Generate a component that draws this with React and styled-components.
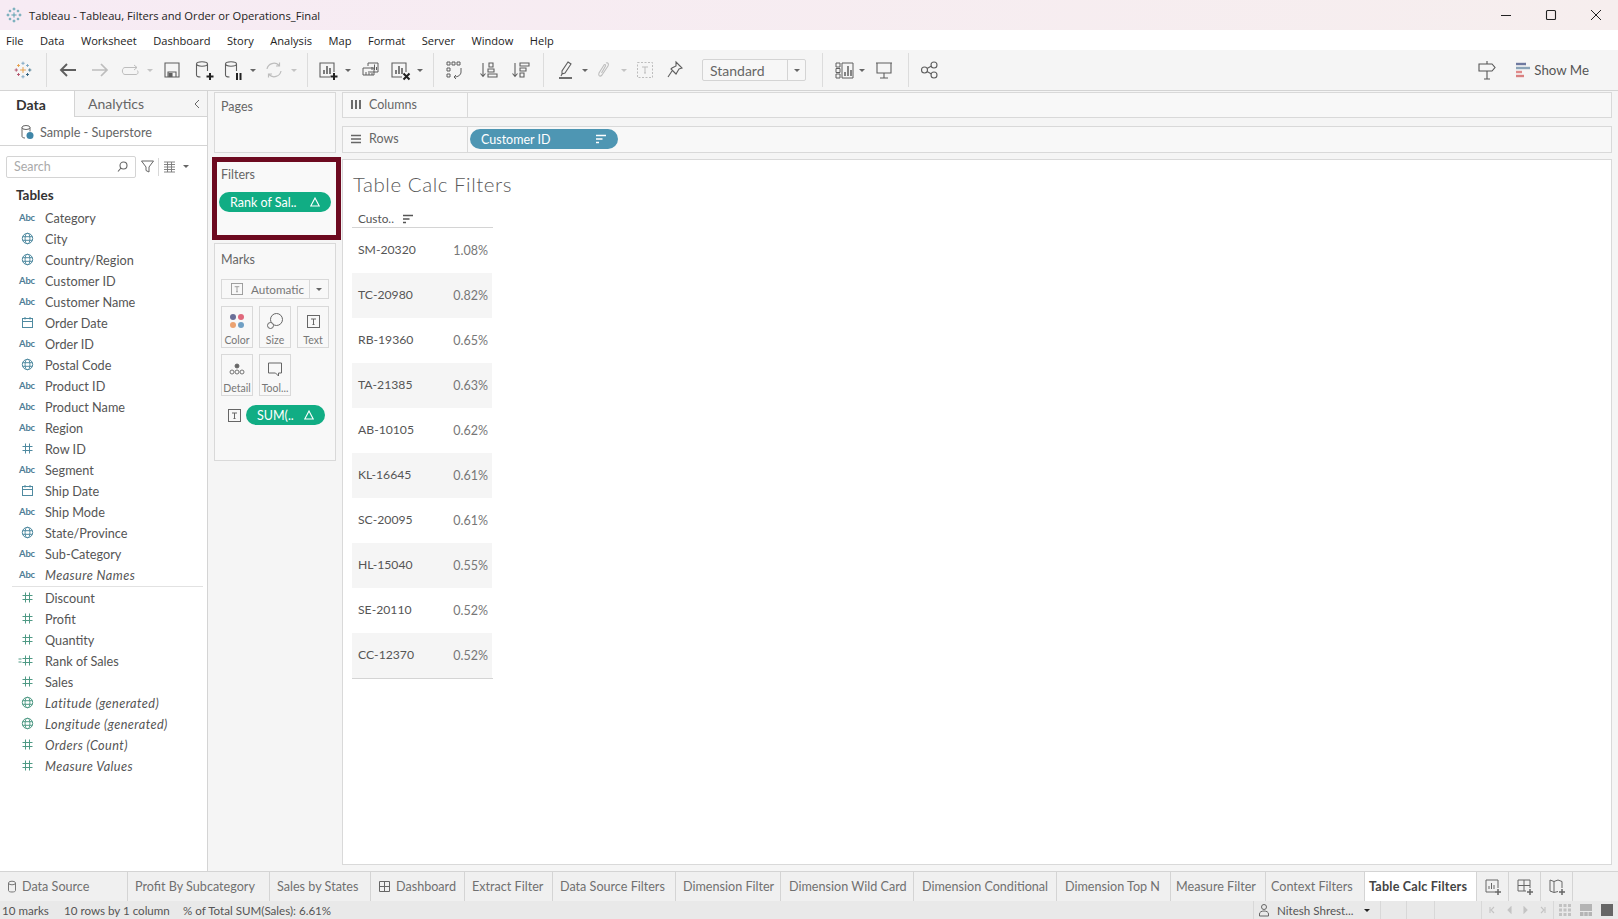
import React from "react";
import styled, { createGlobalStyle } from "styled-components";

const Global = createGlobalStyle`
  html, body { margin: 0; padding: 0; background: #fff; }
  * { box-sizing: border-box; }
`;
const UI = `"Open Sans", "Noto Sans", sans-serif`;
const TB = `Lato, "Open Sans", sans-serif`;

const Page = styled.div`
  width: 1618px; height: 919px; overflow: hidden; display: flex; flex-direction: column;
  font-family: ${TB}; color: #555; background: #f5f5f5;
`;
const TitleBar = styled.div`
  height: 30px; flex: none; display: flex; align-items: center; padding-left: 6px;
  background: linear-gradient(90deg, #f7ebf4, #f6eeee);
`;
const TitleText = styled.span`
  font: 11.2px ${UI}; color: #222; margin-left: 7px;
`;
const WinButtons = styled.div`
  margin-left: auto; display: flex; align-items: center; color: #222;
`;
const WinBtn = styled.div`
  width: 45px; height: 30px; display: flex; align-items: center; justify-content: center;
`;
const MenuBar = styled.div`
  height: 20px; flex: none; display: flex; align-items: center; background: #fff; padding-left: 6px; gap: 16.5px;
  font: 11.1px ${UI}; color: #222;
`;
const Toolbar = styled.div`
  height: 41px; flex: none; display: flex; align-items: center; background: #f5f5f5; border-bottom: 1px solid #d4d4d4;
`;
const Tool = styled.div`
  width: ${p => p.$w}px; height: 32px; flex: none; display: flex; align-items: center; justify-content: center;
  color: ${p => (p.$dim ? "#bdbdbd" : "#5f5f5f")};
  margin-left: ${p => p.$ml || 0}px;
`;
const ToolSep = styled.div`
  width: 1px; height: 34px; flex: none; background: #dcdcdc;
  margin: 0 ${p => p.$r || 5}px 0 ${p => p.$l || 0}px;
`;
const Drop = styled.span`
  width: 0; height: 0; border-left: 3px solid transparent; border-right: 3px solid transparent;
  border-top: 3.5px solid ${p => p.$c || (p.$dim ? "#c4c4c4" : "#666")};
  margin-left: ${p => p.$ml || 0}px;
`;
const Combo = styled.div`
  width: 104px; height: 22px; margin-left: 10px; flex: none; display: flex; border: 1px solid #d4d4d4; border-radius: 2px;
  font: 14px ${TB}; color: #666; align-items: center; background: #f7f7f7;
`;
const ComboText = styled.span` flex: 1; padding-left: 7px; `;
const ComboArrow = styled.span`
  width: 18px; height: 100%; border-left: 1px solid #d4d4d4; display: flex; align-items: center; justify-content: center;
`;
const ToolRight = styled.div`
  margin-left: auto; display: flex; align-items: center; padding-right: 29px; color: #555;
`;
const ShowMe = styled.span` font: 13.3px ${TB}; color: #555; margin-left: 3px; `;
const Main = styled.div` flex: 1; display: flex; min-height: 0; `;
const DataPane = styled.div`
  width: 208px; flex: none; background: #fff; border-right: 1px solid #d4d4d4; display: flex; flex-direction: column;
`;
const PaneTabs = styled.div` height: 26px; flex: none; display: flex; `;
const PaneTab = styled.div`
  width: ${p => p.$w}; flex: ${p => (p.$grow ? 1 : "none")}; display: flex; align-items: center; font-size: 14px;
  padding-left: ${p => p.$pl}px; padding-right: 4px;
  ${p => (p.$active
    ? "font-weight: 700; color: #333; border-right: 1px solid #d4d4d4;"
    : "color: #666; background: #f5f5f5; border-bottom: 1px solid #d4d4d4; justify-content: space-between;")}
`;
const SourceRow = styled.div`
  height: 29px; flex: none; border-bottom: 1px solid #d4d4d4; display: flex; align-items: center; padding: 2px 0 0 19px; gap: 5px;
  font-size: 12.7px; color: #666;
`;
const SearchRow = styled.div` height: 38px; flex: none; display: flex; align-items: center; padding: 3px 0 0 6px; `;
const SearchBox = styled.div`
  width: 130px; height: 22px; border: 1px solid #d4d4d4; border-radius: 2px; display: flex; align-items: center;
  justify-content: space-between; padding: 0 6px 0 7px; font-size: 12.5px; color: #aaa;
`;
const SearchTool = styled.div`
  width: ${p => p.$w}px; flex: none; display: flex; align-items: center; justify-content: center; color: #666;
  ${p => p.$sep && "border-left: 1px solid #d8d8d8; height: 18px;"}
`;
const TablesHead = styled.div`
  height: 21px; flex: none; padding: 0 0 0 16px; display: flex; align-items: center;
  font-size: 13.5px; font-weight: 700; color: #333;
`;
const FieldList = styled.div` padding-top: 2px; display: flex; flex-direction: column; `;
const FieldRow = styled.div`
  height: 21px; flex: none; display: flex; align-items: center; font-size: 12.7px; color: #555;
  ${p => p.$italic && "font-style: italic; letter-spacing: 0.42px;"}
`;
const FieldIcon = styled.span`
  width: 45px; padding-left: 17px; padding-right: 8px; flex: none; display: flex; justify-content: center;
  color: ${p => p.$c}; font-style: normal; letter-spacing: 0;
`;
const AbcText = styled.span`
  font: 700 9.5px ${TB}; color: #4f7d96; letter-spacing: -0.2px;
`;
const FieldDivider = styled.div` height: 1px; background: #e2e2e2; margin: 1px 4px 0 12px; flex: none; `;
const CardsCol = styled.div`
  width: 134px; flex: none; display: flex; flex-direction: column; padding: 1px 0 0 6px;
`;
const Card = styled.div`
  width: 122px; height: ${p => p.$h}px; flex: none; background: #f8f8f8; border: 1px solid #d9d9d9; padding: ${p => p.$pt}px 6px 6px;
  font-size: 12.5px; color: #666;
`;
const CardLabel = styled.div` height: 18px; display: flex; align-items: center; `;
const RedBox = styled.div`
  width: 129px; height: 83px; flex: none; margin: 4px 0 3px -2px; border: 5px solid #6d0a20; background: #f9f9f9;
  padding: 3px 4px 0; font-size: 12.5px; color: #666; display: flex; flex-direction: column;
`;
const Pill = styled.div`
  height: 20px; flex: none; width: ${p => p.$w}px; border-radius: 10px; background: ${p => p.$bg};
  color: #fff; font-size: 12.5px; display: flex; align-items: center; justify-content: space-between;
  padding: 0 ${p => p.$pr}px 0 ${p => p.$pl}px; margin-top: ${p => p.$mt || 0}px; margin-left: ${p => p.$ml || 0}px;
`;
const MarkSelect = styled.div`
  height: 20px; margin-top: 11px; border: 1px solid #d9d9d9; display: flex; align-items: center; background: #f8f8f8;
  font-size: 11.7px; color: #777;
`;
const MarkSelectMain = styled.div`
  flex: 1; display: flex; align-items: center; justify-content: center; gap: 8px; height: 100%; padding-left: 4px; border-right: 1px solid #d9d9d9;
`;
const MarkSelectArrow = styled.div` width: 18px; display: flex; justify-content: center; `;
const MarkGrid = styled.div`
  margin-top: 7px; display: grid; grid-template-columns: repeat(3, 32px); grid-auto-rows: 42px; gap: 6px;
`;
const MarkCell = styled.div`
  border: 1px solid #d9d9d9; display: flex; flex-direction: column; align-items: center; padding-top: 5px;
  font-size: 10.5px; color: #777;
`;
const MarkIcon = styled.div` height: 18px; display: flex; align-items: center; justify-content: center; margin-bottom: 4px; `;
const MarkPillRow = styled.div` display: flex; align-items: center; margin-top: 9px; padding-left: 7px; `;
const VizCol = styled.div`
  flex: 1; min-width: 0; display: flex; flex-direction: column; padding: 1px 6px 6px 0;
`;
const Shelf = styled.div`
  height: ${p => p.$h}px; flex: none; display: flex; background: #f8f8f8; border: 1px solid #d9d9d9; margin-bottom: ${p => p.$mb}px;
`;
const ShelfLabel = styled.div`
  width: 125px; flex: none; border-right: 1px solid #d9d9d9; display: flex; align-items: center; gap: 7px; padding: 0 0 2px 7px;
  font-size: 12.5px; color: #666;
`;
const ShelfBody = styled.div` flex: 1; display: flex; align-items: center; padding-left: 2px; `;
const Viz = styled.div`
  flex: 1; background: #fff; border: 1px solid #d9d9d9; padding: 0 0 0 9px; min-height: 0;
`;
const VizTitle = styled.div`
  height: 50px; padding: 0 0 2px 1px; display: flex; align-items: center; font-size: 20.5px; font-weight: 300; color: #5a5a5a; letter-spacing: 0.55px;
`;
const VizTable = styled.div` width: 141px; border-bottom: 1px solid #d4d4d4; `;
const TableHead = styled.div`
  height: 18px; border-bottom: 1px solid #d4d4d4; display: flex; align-items: center; gap: 8px; padding-left: 6px;
  font-size: 11.8px; color: #555;
`;
const TableRow = styled.div`
  height: 45px; width: 140px; display: flex; align-items: center; justify-content: space-between; padding: 0 4px 0 6px;
  background: ${p => (p.$alt ? "#f5f5f5" : "#fff")}; font-size: 12.2px; color: #555;
`;
const RowId = styled.span` margin-top: -3px; `;
const RowPct = styled.span` color: #777; font-size: 12.5px; margin-top: -1px; `;
const TabBar = styled.div`
  height: 30px; flex: none; display: flex; background: #f0f0f0; border-top: 1px solid #d4d4d4;
`;
const Tab = styled.div`
  width: ${p => p.$w}px; flex: none; display: flex; align-items: center; gap: 5px; padding-left: ${p => p.$pl || 7}px;
  border-right: 1px solid #d4d4d4; font-size: 12.6px; white-space: nowrap;
  ${p => (p.$active ? "background: #fff; color: #444; font-weight: 700; letter-spacing: 0.2px;" : "color: #707070;")}
`;
const IconTab = styled(Tab)` width: 32px; padding: 0; justify-content: center; `;
const StatusBar = styled.div`
  height: 18px; flex: none; display: flex; align-items: center; background: #e9e9e9; font-size: 11.6px; color: #555;
`;
const StatusItem = styled.span` margin-left: ${p => p.$ml}px; width: ${p => p.$w}px; white-space: nowrap; `;
const StatusRight = styled.div` margin-left: auto; display: flex; height: 100%; `;
const StatusCell = styled.div`
  width: ${p => p.$w}px; flex: none; border-left: 1px solid #d8d8d8; display: flex; align-items: center;
  justify-content: ${p => p.$j || "center"}; gap: ${p => p.$g || 0}px; padding-left: ${p => p.$pl || 0}px;
`;
const Svg = ({ s = 18, w, h, sw = 1.1, c = "currentColor", children }) => (
  <svg width={w || s} height={h || s} viewBox={`0 0 ${w || s} ${h || s}`} fill="none" stroke={c} strokeWidth={sw}>{children}</svg>
);

const Logo = ({ s = 18, c }) => {
  const items = [
    [10, 10, 3.2, c || "#e8a04b"], [10, 2.5, 1.8, c || "#7fa9c4"], [10, 17.5, 1.8, c || "#7fa9c4"], [2.5, 10, 1.8, c || "#b5566d"], [17.5, 10, 1.8, c || "#4f7f95"],
    [5, 5, 1.6, c || "#e8a04b"], [15, 5, 1.6, c || "#7fa9c4"], [5, 15, 1.6, c || "#b5566d"], [15, 15, 1.6, c || "#2f5f7a"],
  ];
  return (
    <svg width={s} height={s} viewBox="0 0 20 20" fill="none" strokeWidth="1.1">
      {items.map(([x, y, r, col], i) => <path key={i} stroke={col} d={`M${x - r} ${y}H${x + r}M${x} ${y - r}V${y + r}`} />)}
    </svg>
  );
};
const Globe = () => (
  <Svg s={13} sw={1}><circle cx="6.5" cy="6.5" r="5.2" /><ellipse cx="6.5" cy="6.5" rx="2.4" ry="5.2" /><path d="M1.5 4.7h10M1.5 8.3h10" /></Svg>
);
const Cal = () => (
  <Svg s={13} sw={1}><rect x="1.5" y="2.5" width="10" height="9" /><path d="M1.5 5.5h10M4 1v2.5M9 1v2.5" /></Svg>
);
const Hash = () => (
  <Svg s={13} sw={1}><path d="M4.5 1.5v10M8.5 1.5v10M1.5 4.5h10M1.5 8.5h10" /></Svg>
);
const CalcHash = () => (
  <svg width="20" height="13" viewBox="0 0 20 13" fill="none" stroke="currentColor" strokeWidth="1" style={{ marginLeft: -7 }}>
    <path d="M4.5 5h3M4.5 8h3M11.5 1.5v10M15.5 1.5v10M8.5 4.5h10M8.5 8.5h10" />
  </svg>
);
const SortIcon = ({ c = "#fff" }) => (
  <Svg w={12} h={10} sw={1.6} c={c}><path d="M1 1.5h10M1 5h6.5M1 8.5h3" /></Svg>
);
const TBox = ({ s = 13, c = "#666" }) => (
  <svg width={s} height={s} viewBox="0 0 13 13" fill="none" stroke={c} strokeWidth="1">
    <rect x="0.5" y="0.5" width="12" height="12" /><path d="M4 4h5M6.5 4v5.5M5.5 9.5h2" />
  </svg>
);
const Delta = () => (
  <Svg s={10} sw={1.1} c="#fff"><path d="M5 1 9.2 9H.8Z" /></Svg>
);
const Cyl = ({ extra }) => (
  <Svg s={22} sw={1.1}>
    <ellipse cx="9" cy="5" rx="5.5" ry="2.2" /><path d="M3.5 5v11c0 1.2 2 2 4 2M14.5 5v7" />
    {extra}
  </Svg>
);
const BarsBox = ({ extra }) => (
  <Svg s={22} sw={1.1}>
    <path d="M13 18H3V4h14v9" /><path d="M7 15V11M10 15V7M13 15V9" strokeWidth="1.6" />
    {extra}
  </Svg>
);
const PlusMark = () => <path d="M13.5 17.5h7M17 14v7" strokeWidth="2" stroke="#222" />;

const fields = [
  ["Category", "a"], ["City", "g"], ["Country/Region", "g"], ["Customer ID", "a"], ["Customer Name", "a"],
  ["Order Date", "c"], ["Order ID", "a"], ["Postal Code", "g"], ["Product ID", "a"], ["Product Name", "a"],
  ["Region", "a"], ["Row ID", "h"], ["Segment", "a"], ["Ship Date", "c"], ["Ship Mode", "a"],
  ["State/Province", "g"], ["Sub-Category", "a"], ["Measure Names", "a", true],
];
const measures = [
  ["Discount", "h"], ["Profit", "h"], ["Quantity", "h"], ["Rank of Sales", "k"], ["Sales", "h"],
  ["Latitude (generated)", "g", true], ["Longitude (generated)", "g", true], ["Orders (Count)", "h", true], ["Measure Values", "h", true],
];
const Field = ({ f, color }) => (
  <FieldRow $italic={f[2]}>
    <FieldIcon $c={color}>
      {f[1] === "a" && <AbcText>Abc</AbcText>}
      {f[1] === "g" && <Globe />}
      {f[1] === "c" && <Cal />}
      {f[1] === "h" && <Hash />}
      {f[1] === "k" && <CalcHash />}
    </FieldIcon>
    {f[0]}
  </FieldRow>
);
const rows = [
  ["SM-20320", "1.08%"], ["TC-20980", "0.82%"], ["RB-19360", "0.65%"], ["TA-21385", "0.63%"], ["AB-10105", "0.62%"],
  ["KL-16645", "0.61%"], ["SC-20095", "0.61%"], ["HL-15040", "0.55%"], ["SE-20110", "0.52%"], ["CC-12370", "0.52%"],
];
const tabs = [
  { t: "Profit By Subcategory", w: 142 }, { t: "Sales by States", w: 101 }, { t: "Dashboard", w: 94, icon: true }, { t: "Extract Filter", w: 88 },
  { t: "Data Source Filters", w: 123 }, { t: "Dimension Filter", w: 105 }, { t: "Dimension Wild Card", w: 133, pl: 8 }, { t: "Dimension Conditional", w: 143, pl: 8 },
  { t: "Dimension Top N", w: 114, pl: 8 }, { t: "Measure Filter", w: 95, pl: 5 }, { t: "Context Filters", w: 99, pl: 5 },
];
const menus = ["File", "Data", "Worksheet", "Dashboard", "Story", "Analysis", "Map", "Format", "Server", "Window", "Help"];

export default function App() {
  return (
    <Page>
      <Global />
      <TitleBar>
        <Logo s={16} c="#4a97a6" />
        <TitleText>Tableau - Tableau, Filters and Order or Operations_Final</TitleText>
        <WinButtons>
          <WinBtn><Svg s={12} sw={1}><path d="M1 6.5h10" /></Svg></WinBtn>
          <WinBtn><Svg s={12} sw={1.1}><rect x="1.5" y="1.5" width="9" height="9" rx="1" /></Svg></WinBtn>
          <WinBtn><Svg s={12} sw={1}><path d="M1 1l10 10M11 1 1 11" /></Svg></WinBtn>
        </WinButtons>
      </TitleBar>
      <MenuBar>{menus.map(m => <span key={m}>{m}</span>)}</MenuBar>
      <Toolbar>
        <Tool $w={46}><Logo s={18} /></Tool>
        <ToolSep />
        <Tool $w={32}><Svg s={20} sw={1.9}><path d="M18 10H3M9 4l-6 6 6 6" /></Svg></Tool>
        <Tool $w={32} $dim><Svg s={20} sw={1.7}><path d="M2 10h15M11 4l6 6-6 6" /></Svg></Tool>
        <Tool $w={28} $dim><Svg w={20} h={14} sw={1}><path d="M5 4.5h12M14 2l3 2.5-3 2.5" /><path d="M17 7.5c1.5.5 1.5 4-1 4H5c-3.5 0-3.5-7 0-7" /></Svg></Tool>
        <Tool $w={12}><Drop $dim /></Tool>
        <Tool $w={32}><Svg s={18} sw={1.1}><path d="M2 2h14v14H2zM5 16v-5h8v5" /><rect x="6" y="12.5" width="3" height="3" fill="currentColor" /></Svg></Tool>
        <Tool $w={32}><Cyl extra={<PlusMark />} /></Tool>
        <Tool $w={26}><Cyl extra={<path d="M15 14v7M18.5 14v7" strokeWidth="2" stroke="#222" />} /></Tool>
        <Tool $w={14}><Drop /></Tool>
        <Tool $w={28} $dim><Svg s={20} sw={1.2}><path d="M3 9a7 7 0 0 1 12-3.5M15.5 2.5V6H12M17 11a7 7 0 0 1-12 3.5M4.5 17.5V14H8" /></Svg></Tool>
        <Tool $w={12}><Drop $dim /></Tool>
        <ToolSep $l={7} $r={6} />
        <Tool $w={28}><BarsBox extra={<PlusMark />} /></Tool>
        <Tool $w={12}><Drop /></Tool>
        <Tool $w={32}><Svg s={20} sw={1}><path d="M8 3h10v9H8" /><path d="M8 3v3M3 8h11v7H3z" /><path d="M12 10V7M14.5 10V4.5M16.5 10V7" /><path d="M6 15v-3M9 15v-2M12 15v-2" /></Svg></Tool>
        <Tool $w={28}><BarsBox extra={<path d="M14.5 14.5l6 6M20.5 14.5l-6 6" strokeWidth="2" stroke="#222" />} /></Tool>
        <Tool $w={12}><Drop /></Tool>
        <ToolSep $l={7} $r={4} />
        <Tool $w={32}><Svg s={20} sw={1}><path d="M3 2h3v3H3zM8 2h3v3H8zM13 2h3v3h-3zM3 8h3v3H3zM3 14h3v3H3z" /><path d="M17 8v4c0 3-3 5-7 5M12 15l-2 2 2 2" /></Svg></Tool>
        <Tool $w={32} $ml={3}><Svg s={20} sw={1.1}><path d="M4 3v13M1.5 13.5 4 16.5l2.5-3" /><path d="M10 3h4v4h-4zM9 9h6v3H9zM9 14h9v3H9z" /></Svg></Tool>
        <Tool $w={32}><Svg s={20} sw={1.1}><path d="M4 3v13M1.5 13.5 4 16.5l2.5-3" /><path d="M9 3h9v3H9zM9 8h6v3H9zM9 13h4v4H9z" /></Svg></Tool>
        <ToolSep $l={6} $r={8} />
        <Tool $w={28}><Svg s={20} sw={1.1}><path d="M12 2l3 2-6 9-3 1v-3zM6 14l-1 2" /><path d="M3 18h13" strokeWidth="1.8" /></Svg></Tool>
        <Tool $w={10}><Drop /></Tool>
        <Tool $w={26} $dim><Svg s={20} sw={1.1}><path d="M13 3c2-1 3 1 2 3l-6 9c-2 2-4 1-3-2l5-8c1-1 2 0 1.5 1l-4 7" /></Svg></Tool>
        <Tool $w={16}><Drop $dim /></Tool>
        <Tool $w={26} $dim><Svg s={18} sw={1}><rect x="1.5" y="1.5" width="15" height="15" strokeDasharray="2 1.5" /><path d="M6 6h6M9 6v6M8 12h2" /></Svg></Tool>
        <Tool $w={34}><Svg s={20} sw={1.1}><path d="M11 2l6 6-3 1-3 5-1-1-4-4 1-1 4-2zM7 11l-4 6" /></Svg></Tool>
        <Combo><ComboText>Standard</ComboText><ComboArrow><Drop /></ComboArrow></Combo>
        <ToolSep $l={16} $r={7} />
        <Tool $w={28}><Svg s={22} sw={1}><path d="M3 4h4v4H3zM3 9.5h4v4H3zM3 15h4v4H3zM9 4h11v15H9z" /><path d="M12 17v-4M15 17V7M18 17v-6" strokeWidth="1.5" /></Svg></Tool>
        <Tool $w={8}><Drop /></Tool>
        <Tool $w={4} />
        <Tool $w={28}><Svg s={22} sw={1.1}><path d="M3 4h16M4 4v10h14V4M11 14v5M7 19h8" /></Svg></Tool>
        <ToolSep $l={10} $r={7} />
        <Tool $w={28}><Svg s={20} sw={1.1}><circle cx="4.5" cy="10" r="3" /><circle cx="14" cy="5" r="3" /><circle cx="14" cy="15" r="3" /><path d="M7 8.5l4.5-2.5M7 11.5l4.5 2.5" /></Svg></Tool>
        <ToolRight>
          <Svg s={22} sw={1.1}><path d="M11 2v3M3 5h13l3 3.5L16 12H3zM11 12v8M8 20h6" /></Svg>
          <Tool $w={17} />
          <Svg w={16} h={18} sw={2.4}><path d="M1 3h10" stroke="#6f7aa0" /><path d="M1 7h14" stroke="#8ba4b8" /><path d="M1 11h6" stroke="#e08a8a" /><path d="M1 15h8" stroke="#d98080" /></Svg>
          <ShowMe>Show Me</ShowMe>
        </ToolRight>
      </Toolbar>
      <Main>
        <DataPane>
          <PaneTabs>
            <PaneTab $w="75px" $pl={16} $active>Data</PaneTab>
            <PaneTab $grow $pl={13}>Analytics <Svg s={12} sw={1}><path d="M8 2 4 6l4 4" /></Svg></PaneTab>
          </PaneTabs>
          <SourceRow>
            <Svg s={16} sw={1} c="#666"><ellipse cx="7" cy="3.5" rx="4" ry="2" /><path d="M3 3.5v9c0 1 2 1.5 3 1.5M11 3.5v4" /><circle cx="11" cy="11.5" r="3.5" fill="#3f86a8" stroke="none" /></Svg>
            Sample - Superstore
          </SourceRow>
          <SearchRow>
            <SearchBox>Search <Svg s={13} sw={1.1} c="#666"><circle cx="7.5" cy="5.5" r="3.5" /><path d="M5 8l-3 3.5" /></Svg></SearchBox>
            <SearchTool $w={22}><Svg s={15} sw={1}><path d="M1.5 2h12L9 8v5l-3-1.5V8z" /></Svg></SearchTool>
            <SearchTool $w={22} $sep><Svg s={13} sw={0.9} c="#777"><path d="M1 2h11M1 4.5h11M1 7h11M1 9.5h11M1 12h11M4.5 2v10M8.5 2v10" /></Svg></SearchTool>
            <SearchTool $w={12}><Drop /></SearchTool>
          </SearchRow>
          <TablesHead>Tables</TablesHead>
          <FieldList>
            {fields.map(f => <Field key={f[0]} f={f} color="#4f8aa0" />)}
            <FieldDivider />
            {measures.map(f => <Field key={f[0]} f={f} color="#4f9a85" />)}
          </FieldList>
        </DataPane>
        <CardsCol>
          <Card $h={61} $pt={4}><CardLabel>Pages</CardLabel></Card>
          <RedBox>
            <CardLabel>Filters</CardLabel>
            <Pill $w={112} $bg="#11ad84" $pl={11} $pr={11} $mt={9} $ml={-2}>Rank of Sal.. <Delta /></Pill>
          </RedBox>
          <Card $h={218} $pt={6}>
            <CardLabel>Marks</CardLabel>
            <MarkSelect>
              <MarkSelectMain><TBox s={12} c="#999" /> Automatic</MarkSelectMain>
              <MarkSelectArrow><Drop /></MarkSelectArrow>
            </MarkSelect>
            <MarkGrid>
              <MarkCell>
                <MarkIcon>
                  <svg width="16" height="16" viewBox="0 0 16 16">
                    <circle cx="4" cy="4" r="3" fill="#6a6f98" /><circle cx="12" cy="4" r="3" fill="#e0697c" />
                    <circle cx="4" cy="12" r="3" fill="#eba271" /><circle cx="12" cy="12" r="3" fill="#6f9fc4" />
                  </svg>
                </MarkIcon>Color
              </MarkCell>
              <MarkCell>
                <MarkIcon><Svg s={18} sw={1} c="#666"><circle cx="10.5" cy="7.5" r="6" fill="#f8f8f8" /><circle cx="4.5" cy="13.5" r="3" fill="#f8f8f8" /></Svg></MarkIcon>Size
              </MarkCell>
              <MarkCell><MarkIcon><TBox /></MarkIcon>Text</MarkCell>
              <MarkCell>
                <MarkIcon><Svg s={16} sw={0.9} c="#666"><circle cx="8" cy="5" r="2" fill="#666" /><circle cx="3" cy="11" r="2" /><circle cx="8" cy="11" r="2" /><circle cx="13" cy="11" r="2" /></Svg></MarkIcon>Detail
              </MarkCell>
              <MarkCell>
                <MarkIcon><Svg s={16} sw={1} c="#666"><path d="M1.5 2h13v10h-3v3l-3-3h-7z" /></Svg></MarkIcon>Tool...
              </MarkCell>
            </MarkGrid>
            <MarkPillRow>
              <TBox />
              <Pill $w={79} $bg="#11ad84" $pl={11} $pr={11} $ml={5}>SUM(.. <Delta /></Pill>
            </MarkPillRow>
          </Card>
        </CardsCol>
        <VizCol>
          <Shelf $h={26} $mb={8}>
            <ShelfLabel>
              <Svg s={12} sw={1.9} c="#666"><path d="M2 2v9M6 2v9M10 2v9" /></Svg>
              Columns
            </ShelfLabel>
            <ShelfBody />
          </Shelf>
          <Shelf $h={27} $mb={6}>
            <ShelfLabel>
              <Svg s={12} sw={1.3} c="#666"><path d="M1 2.5h10M1 6h10M1 9.5h10" /></Svg>
              Rows
            </ShelfLabel>
            <ShelfBody>
              <Pill $w={148} $bg="#4e96b3" $pl={11} $pr={11} $mt={-1}>Customer ID <SortIcon /></Pill>
            </ShelfBody>
          </Shelf>
          <Viz>
            <VizTitle>Table Calc Filters</VizTitle>
            <VizTable>
              <TableHead>Custo.. <SortIcon c="#555" /></TableHead>
              {rows.map((r, i) => (
                <TableRow key={r[0]} $alt={i % 2 === 1}><RowId>{r[0]}</RowId><RowPct>{r[1]}</RowPct></TableRow>
              ))}
            </VizTable>
          </Viz>
        </VizCol>
      </Main>
      <TabBar>
        <Tab $w={128}>
          <Svg w={10} h={13} sw={1} c="#777"><ellipse cx="5" cy="3" rx="3.5" ry="1.8" /><path d="M1.5 3v7.5c0 1 1.5 1.5 3.5 1.5s3.5-.5 3.5-1.5V3" /></Svg>
          Data Source
        </Tab>
        {tabs.map(t => (
          <Tab key={t.t} $w={t.w} $pl={t.pl}>
            {t.icon && <Svg s={13} sw={1} c="#666"><path d="M1.5 1.5h10v10h-10zM6.5 1.5v10M1.5 6.5h10" /></Svg>}
            {t.t}
          </Tab>
        ))}
        <Tab $w={112} $pl={4} $active>Table Calc Filters</Tab>
        <IconTab><Svg s={18} sw={1} c="#666"><path d="M11 14H2V2h12v8" /><path d="M5 11V8M7.5 11V5M10 11V7" /><path d="M11 14h6M14 11v6" strokeWidth="1.5" /></Svg></IconTab>
        <IconTab><Svg s={18} sw={1} c="#666"><path d="M10 13H2V2h12v8M8 2v11M2 7.5h12" /><path d="M11 14h6M14 11v6" strokeWidth="1.5" /></Svg></IconTab>
        <IconTab><Svg s={18} sw={1} c="#666"><path d="M2 2l4 1.5L10 2l4 1.5V10M2 2v11l4 1.5 4-1M6 3.5V14" /><path d="M11 14h6M14 11v6" strokeWidth="1.5" /></Svg></IconTab>
      </TabBar>
      <StatusBar>
        <StatusItem $ml={2} $w={62}>10 marks</StatusItem>
        <StatusItem $ml={0} $w={119}>10 rows by 1 column</StatusItem>
        <StatusItem $ml={0} $w={200}>% of Total SUM(Sales): 6.61%</StatusItem>
        <StatusRight>
          <StatusCell $w={127} $j="flex-start" $pl={4} $g={7}>
            <Svg w={12} h={14} sw={1} c="#666"><circle cx="6" cy="4" r="2.5" /><path d="M1.5 13v-2c0-2 2-3 4.5-3s4.500 1 4.500 3v2z" /></Svg>
            Nitesh Shrest...
            <Drop $c="#222" $ml={4} />
          </StatusCell>
          <StatusCell $w={26} />
          <StatusCell $w={28} />
          <StatusCell $w={47} />
          <StatusCell $w={72} $g={11}>
            <Svg w={6} h={8} c="#c4c4c4"><path d="M1 1v6M5 1 2 4l3 3" /></Svg>
            <Svg w={6} h={8} c="#c4c4c4"><path d="M5 1 2 4l3 3z" fill="#c4c4c4" /></Svg>
            <Svg w={6} h={8} c="#c4c4c4"><path d="M1 1l3 3-3 3z" fill="#c4c4c4" /></Svg>
            <Svg w={6} h={8} c="#c4c4c4"><path d="M5 1v6M1 1l3 3-3 3" /></Svg>
          </StatusCell>
          <StatusCell $w={65} $g={9}>
            <svg width="12" height="12" viewBox="0 0 12 12" fill="#c2c2c2"><rect width="3" height="3" /><rect x="4.5" width="3" height="3" /><rect x="9" width="3" height="3" /><rect y="4.5" width="3" height="3" /><rect x="4.5" y="4.5" width="3" height="3" /><rect x="9" y="4.5" width="3" height="3" /><rect y="9" width="3" height="3" /><rect x="4.5" y="9" width="3" height="3" /><rect x="9" y="9" width="3" height="3" /></svg>
            <svg width="12" height="12" viewBox="0 0 12 12" fill="#b4b4b4"><rect width="12" height="7" /><rect y="8" width="3.5" height="4" /><rect x="4.25" y="8" width="3.5" height="4" /><rect x="8.5" y="8" width="3.5" height="4" /></svg>
            <svg width="12" height="12" viewBox="0 0 12 12" fill="#666"><rect width="12" height="12" /></svg>
          </StatusCell>
        </StatusRight>
      </StatusBar>
    </Page>
  );
}
